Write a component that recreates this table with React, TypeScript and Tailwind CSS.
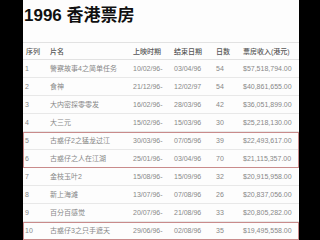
import React from 'react';

type Film = {
    no: string;
    name: string;
    start: string;
    end: string;
    days: string;
    gross: string;
};

const films: Film[] = [
    { no: '1', name: '警察故事4之简单任务', start: '10/02/96-', end: '03/04/96', days: '54', gross: '$57,518,794.00' },
    { no: '2', name: '食神', start: '21/12/96-', end: '12/02/97', days: '54', gross: '$40,861,655.00' },
    { no: '3', name: '大内密探零零发', start: '16/02/96-', end: '28/03/96', days: '42', gross: '$36,051,899.00' },
    { no: '4', name: '大三元', start: '15/02/96-', end: '15/03/96', days: '30', gross: '$25,218,130.00' },
    { no: '5', name: '古惑仔2之猛龙过江', start: '30/03/96-', end: '07/05/96', days: '39', gross: '$22,493,617.00' },
    { no: '6', name: '古惑仔之人在江湖', start: '25/01/96-', end: '03/04/96', days: '70', gross: '$21,115,357.00' },
    { no: '7', name: '金枝玉叶2', start: '15/08/96-', end: '15/09/96', days: '32', gross: '$20,915,958.00' },
    { no: '8', name: '新上海滩', start: '13/07/96-', end: '07/08/96', days: '26', gross: '$20,837,056.00' },
    { no: '9', name: '百分百感觉', start: '20/07/96-', end: '21/08/96', days: '33', gross: '$20,805,282.00' },
    { no: '10', name: '古惑仔3之只手遮天', start: '29/06/96-', end: '02/08/96', days: '35', gross: '$19,495,558.00' },
];

const cols = 'grid grid-cols-[26px_84px_40px_42px_28px_56px] items-center';

const Row = ({ f }: { f: Film }) => (
    <div className={`${cols} h-[18px] border-b border-[#e8e8e8] text-[#888]`}>
        <div className="pl-[2px]">{f.no}</div>
        <div className="pl-[1px] whitespace-nowrap">{f.name}</div>
        <div className="whitespace-nowrap">{f.start}</div>
        <div className="pl-[1px]">{f.end}</div>
        <div className="pl-[1px]">{f.days}</div>
        <div className="whitespace-nowrap">{f.gross}</div>
    </div>
);

const App = () => {
    return (
        <div className="flex w-[320px] h-[240px] overflow-hidden bg-black font-['Liberation_Sans','Noto_Sans_CJK_SC',sans-serif]">
            <div className="w-[23px] shrink-0" />
            <div className="w-[276px] shrink-0 bg-[#fdfdfd] flex flex-col">
                {/* title */}
                <div className="h-[44px] pt-[7px] pl-[1px]">
                    <h1 className="text-[17px] leading-[17px] font-bold text-[#111]">1996 香港票房</h1>
                </div>
                <div className="text-[7px] leading-none">
                    <div className={`${cols} h-[18px] border-t border-b border-[#e2e2e2] text-[#555] font-medium`}>
                        <div className="pl-[3px]">序列</div>
                        <div className="pl-[1px]">片名</div>
                        <div>上映时期</div>
                        <div className="pl-[1px]">结束日期</div>
                        <div className="pl-[1px]">日数</div>
                        <div>票房收入(港元)</div>
                    </div>
                    {films.slice(0, 4).map((f) => (
                        <Row key={f.no} f={f} />
                    ))}
                    <div className="outline outline-1 -outline-offset-1 outline-[#c98b8b]">
                        {films.slice(4, 6).map((f) => (
                            <Row key={f.no} f={f} />
                        ))}
                    </div>
                    {films.slice(6, 9).map((f) => (
                        <Row key={f.no} f={f} />
                    ))}
                    <div className="outline outline-1 -outline-offset-1 outline-[#c98b8b]">
                        <Row f={films[9]} />
                    </div>
                </div>
            </div>
            <div className="flex-1" />
        </div>
    );
};

export default App;
